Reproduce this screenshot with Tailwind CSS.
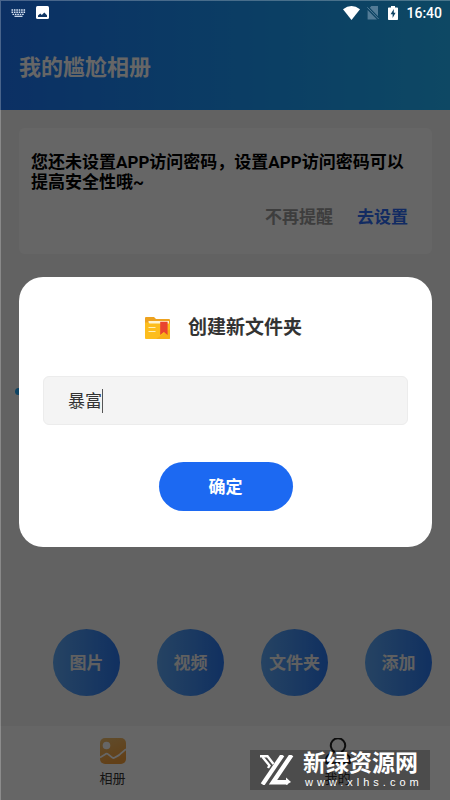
<!DOCTYPE html>
<html lang="zh-CN">
<head>
<meta charset="utf-8">
<meta name="viewport" content="width=device-width, initial-scale=1">
<title>我的尴尬相册</title>
<script src="https://cdn.jsdelivr.net/npm/@tailwindcss/browser@4"></script>
</head>
<body class="relative flex min-h-screen flex-col bg-[#f6f6f6] font-[Roboto,'Noto_Sans_CJK_SC',sans-serif] text-[17px] leading-5">

  <header class="bg-linear-to-r from-[#1e78fa] to-[#23b4fa] px-[19px] pt-[53px] pb-[27px]">
    <h1 class="text-[22px] leading-[30px] font-bold text-white">我的尴尬相册</h1>
  </header>

  <main class="flex flex-1 flex-col pt-[18px] pr-[18px] pb-[30px] pl-[19px]">
    <section class="rounded-md bg-white px-3 pt-6 pb-[27px]">
      <p class="pr-4 font-bold text-black">您还未设置APP访问密码，设置APP访问密码可以提高安全性哦~</p>
      <div class="mt-[15px] flex justify-end gap-6 pr-3 font-bold">
        <button type="button" class="text-[#999]">不再提醒</button>
        <button type="button" class="text-[#2f6cf5]">去设置</button>
      </div>
    </section>

    <div class="mt-[134px] -ml-1 h-[7px] w-16 rounded-full bg-[#23a8f5]"></div>

    <div class="mt-auto flex justify-end gap-[37px] font-bold text-[#f0f0f0]">
      <button type="button" class="size-[67px] rounded-full bg-linear-to-r from-[#5fa8f5] to-[#2a78f0]">图片</button>
      <button type="button" class="size-[67px] rounded-full bg-linear-to-r from-[#5fa8f5] to-[#2a78f0]">视频</button>
      <button type="button" class="size-[67px] rounded-full bg-linear-to-r from-[#5fa8f5] to-[#2a78f0]">文件夹</button>
      <button type="button" class="size-[67px] rounded-full bg-linear-to-r from-[#5fa8f5] to-[#2a78f0]">添加</button>
    </div>
  </main>

  <nav class="grid h-[74px] grid-cols-2 bg-white text-[13px] leading-4 text-[#333]">
    <a href="#album" class="flex flex-col items-center gap-[7px] pt-3">
      <svg class="size-[26px]" viewBox="0 0 26 26" fill="none" aria-hidden="true">
        <defs><linearGradient id="album" x1="0" y1="0" x2="0.4" y2="1"><stop stop-color="#f0bf70"/><stop offset="1" stop-color="#f5a03c"/></linearGradient></defs>
        <rect width="26" height="26" rx="5" fill="url(#album)"/>
        <circle cx="6.5" cy="7.5" r="3.8" fill="#fff"/>
        <path d="M0 19.5 5.8 15.9Q7 15.2 8 16.1L12.3 19.6Q13.3 20.3 14.4 19.8L18.6 17.4Q20 16.6 21 15.3L26 11.2" stroke="#fff" stroke-width="1.8"/>
      </svg>
      <span>相册</span>
    </a>
    <a href="#mine" class="flex flex-col items-center gap-[7px] pt-3">
      <svg class="size-[26px]" viewBox="0 0 26 26" fill="none" stroke="#222" stroke-width="2" stroke-linejoin="round" aria-hidden="true">
        <path d="M9.2 13.6A7.2 7.2 0 1 1 16.8 13.6Q17.6 14.8 20.2 15.6Q24.8 17.5 24.8 21V25H1.2V21Q1.2 17.5 5.8 15.6Q8.4 14.8 9.2 13.6Z"/>
      </svg>
      <span>我的</span>
    </a>
  </nav>

  <!-- Scrim, status bar and dialog -->
  <div class="absolute inset-0 border-t border-l border-white/25 bg-black/60"></div>

  <div class="absolute inset-x-0 top-0 flex h-[25px] items-center justify-between pr-2 pl-[11px] text-white">
    <div class="flex items-center gap-[10px]">
      <svg class="h-2 w-[15px]" viewBox="0 0 15 8" fill="none" stroke="#dce6f5" aria-hidden="true">
        <path d="M0.5 1H14.5M0.5 3.3H14.5" stroke-width="1.5" stroke-dasharray="1.6 .8"/>
        <path d="M1.5 5.4H13.5" stroke-width="1.4" stroke-dasharray="1.6 .8"/>
        <path d="M3.5 7.3H11.5" stroke-width="1.2"/>
      </svg>
      <svg class="size-[13px]" viewBox="0 0 13 13" aria-hidden="true">
        <rect width="13" height="13" rx="1.5" fill="#fff"/>
        <path d="M2 11V9.5L4.3 7.6 5.8 9 8.3 6.5 11 9.3V11Z" fill="#123765"/>
      </svg>
    </div>
    <div class="flex items-center">
      <svg class="mr-[7px] h-[14px] w-[17px]" viewBox="0 0 17 14" fill="#fff" aria-hidden="true"><path d="M0 3.2Q8.5-3.2 17 3.2L8.5 14Z"/></svg>
      <svg class="mr-[9px] h-[14px] w-3" viewBox="0 0 12 14" aria-hidden="true">
        <path d="M4.3 0H11V10.2L2.8 1.7ZM.6 4 10 13.5H.6Z" fill="#527b96"/>
        <path d="M.3 1.3 11.7 13" stroke="#527b96" stroke-width="1"/>
      </svg>
      <svg class="mr-2 h-[14px] w-[10px]" viewBox="0 0 10 14" aria-hidden="true">
        <path d="M3 0H7V1.4H9.2Q10 1.4 10 2.2V13.2Q10 14 9.2 14H.8Q0 14 0 13.2V2.2Q0 1.4.8 1.4H3Z" fill="#fff"/>
        <path d="M5.8 3 2.6 8.2H4.6V12L7.6 6.8H5.8Z" fill="#0f4363"/>
      </svg>
      <span class="text-sm font-medium">16:40</span>
    </div>
  </div>

  <form role="dialog" aria-labelledby="dialog-title" class="absolute top-[277px] right-[18px] left-[19px] flex flex-col items-center rounded-[24px] bg-white px-6 pt-9 pb-9">
    <div class="flex items-center gap-[18px] pr-1">
      <svg class="h-[22px] w-[25px]" viewBox="0 0 25 22" aria-hidden="true">
        <path d="M0 1Q0 0 1 0H9L11 2H24Q25 2 25 3V8H0Z" fill="#eda21f"/>
        <path d="M3.5 4H24V8H3.5Z" fill="#fff3d0"/>
        <path d="M0 5.5H3.5L4.5 6.5H25V21Q25 22 24 22H1Q0 22 0 21Z" fill="#fdbd1c"/>
        <path d="M11 22 25 12V21Q25 22 24 22Z" fill="#f7ae18"/>
        <path d="M15.2 4.8H22.6V18L18.9 15 15.2 18Z" fill="#e9432f"/>
        <path d="M3.5 10.5H10.5M3.5 14.5H10.5" stroke="#fff0b8" stroke-width="1.2"/>
      </svg>
      <h2 id="dialog-title" class="pt-px text-[19px] leading-7 font-bold text-[#333]"><label for="folder-name">创建新文件夹</label></h2>
    </div>
    <div class="mt-[34px] flex h-[49px] w-full items-center rounded-md border border-[#ececec] bg-[#f4f4f4] px-6">
      <input id="folder-name" type="text" value="暴富" class="field-sizing-content text-[#333] caret-transparent outline-none">
      <span class="h-6 w-px bg-[#555]"></span>
    </div>
    <button type="submit" class="mt-[37px] h-[49px] w-[134px] rounded-full bg-[#1c69f2] font-bold text-white">确定</button>
  </form>

  <!-- Site mark -->
  <div class="absolute right-5 bottom-[10px] flex h-10 w-[180px] items-center bg-black/25 pl-[10px] text-white">
    <svg class="h-[30px] w-[35px] shrink-0" viewBox="0 0 35 30" fill="none" stroke="#fff" aria-hidden="true">
      <path d="M0 1.2H7.5L13.5 9" stroke-width="2.4"/>
      <path d="M2.5 2 9.5 10.5 8 13" stroke-width="2.4"/>
      <path d="M22.5 0 2.5 29.5" stroke-width="4.2"/>
      <path d="M31.5 0 13 27.2H28" stroke-width="4.4"/>
      <path d="M26 22.5 31 27 26 30Z" fill="#fff" stroke="none"/>
    </svg>
    <div class="ml-2 flex flex-col">
      <span class="text-[23px] leading-6 font-bold">新绿资源网</span>
      <span class="pl-0.5 font-['Liberation_Sans',sans-serif] text-[11px] leading-3 tracking-[4px]">www.xlhs.com</span>
    </div>
  </div>
</body>
</html>
